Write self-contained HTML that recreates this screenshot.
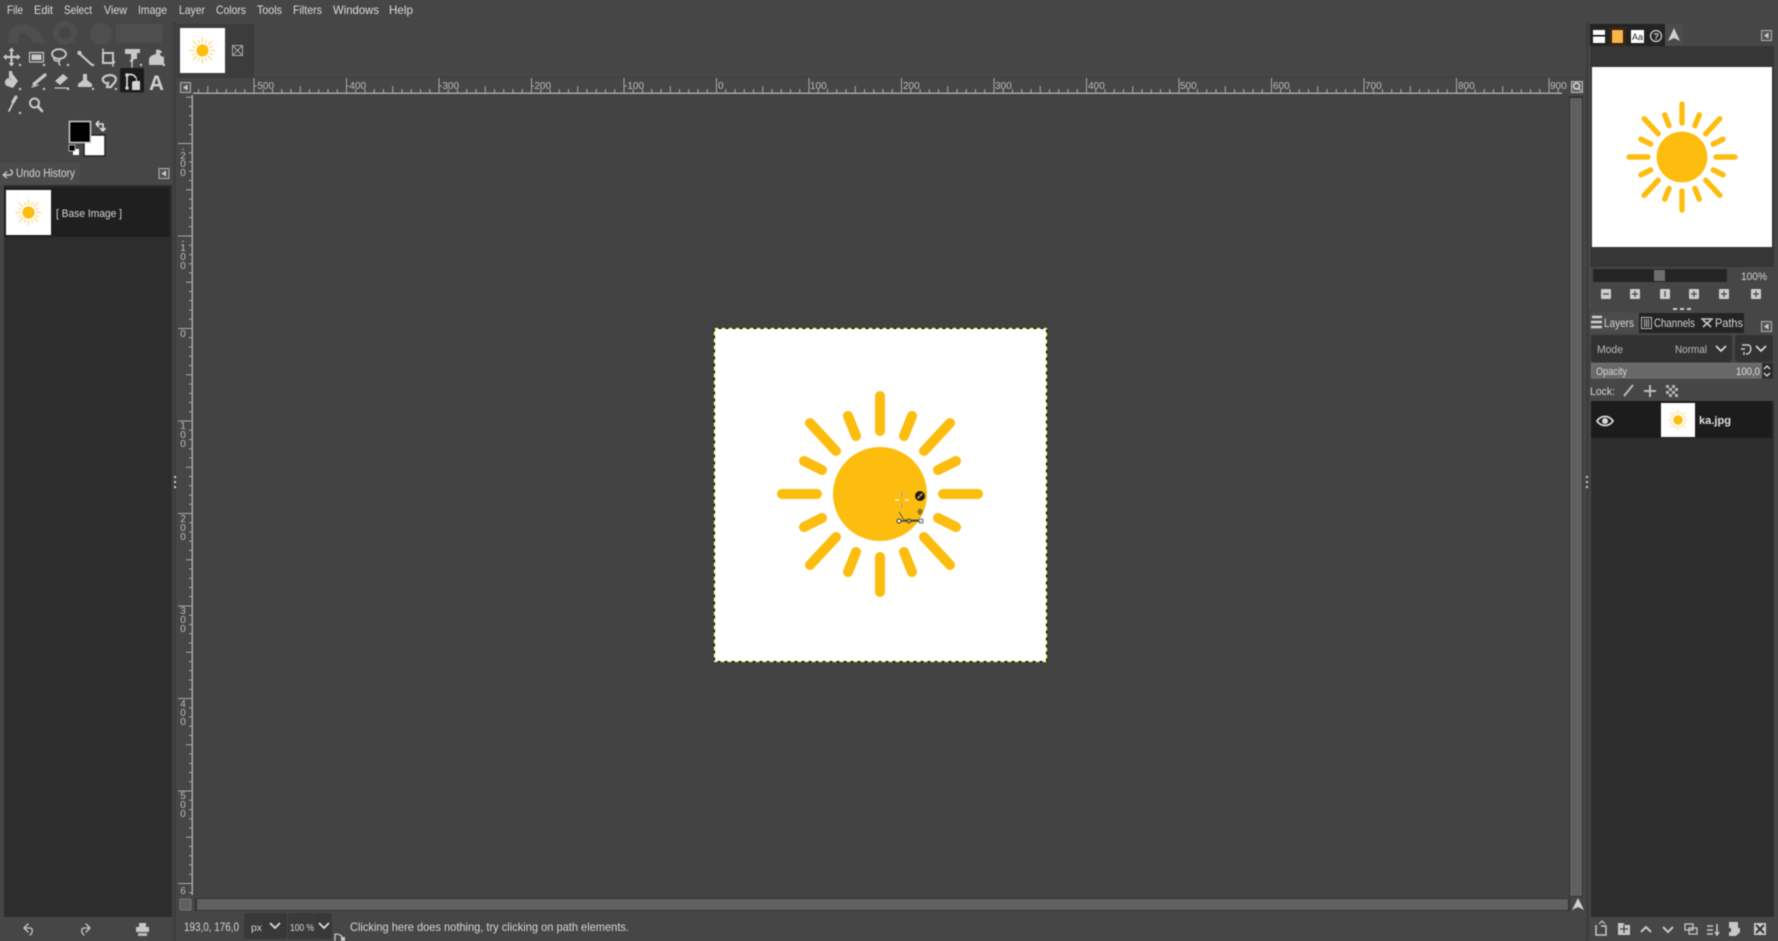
<!DOCTYPE html>
<html><head><meta charset="utf-8"><title>GIMP</title>
<style>
html,body{margin:0;padding:0;background:#464646;width:1778px;height:941px;overflow:hidden}
svg{display:block;filter:blur(.5px)}
text{font-family:"Liberation Sans",sans-serif;fill:#d6d6d6;font-size:12px}
.m{fill:#dcdcdc}
.i{fill:none;stroke:#c8c8c8;stroke-width:1.6}
.f{fill:#c8c8c8;stroke:none}
.r{fill:#bcbcbc;font-size:10px}
</style></head><body>
<svg width="1778" height="941" viewBox="0 0 1778 941" xmlns="http://www.w3.org/2000/svg">
<defs>
<g id="sun">
<circle r="47" fill="#fdbd0f"/>
<path d="M0-98V-63M0 98V63M-98 0H-63M98 0H63M-70-71L-44-43M70-71L44-43M-70 71L-44 43M70 71L44 43M-32-78L-24-58M32-78L24-58M-32 78L-24 58M32 78L24 58M-76-33L-58-24M76-33L58-24M-76 33L-58 24M76 33L58 24" stroke="#fdbd0f" stroke-width="10" stroke-linecap="round" fill="none"/>
</g>
<g id="sunT">
<path d="M0-98V-63M0 98V63M-98 0H-63M98 0H63M-70-71L-44-43M70-71L44-43M-70 71L-44 43M70 71L44 43M-32-78L-24-58M32-78L24-58M-32 78L-24 58M32 78L24 58M-76-33L-58-24M76-33L58-24M-76 33L-58 24M76 33L58 24" stroke="#fbd56a" stroke-width="8" stroke-linecap="round" fill="none"/>
<circle r="47" fill="#fdbd0f"/>
</g>
<pattern id="hr" patternUnits="userSpaceOnUse" x="716" y="78" width="92.5" height="16">
<path d="M.5 0V16M9.75 11V15M19 11V15M28.25 11V15M37.5 11V15M46.75 8V15M56 11V15M65.25 11V15M74.5 11V15M83.75 11V15" stroke="#aaa" stroke-width="1" fill="none"/>
</pattern>
<pattern id="vr" patternUnits="userSpaceOnUse" x="178" y="328" width="15" height="92.5">
<path d="M0 .5H15M11 9.75H15M11 19H15M11 28.25H15M11 37.5H15M8 46.75H15M11 56H15M11 65.25H15M11 74.5H15M11 83.75H15" stroke="#aaa" stroke-width="1" fill="none"/>
</pattern>
<g id="mb"><rect x=".5" y=".5" width="10" height="10" fill="#555" stroke="#b0b0b0"/><path d="M7.5 2.5V8.5L3 5.5Z" fill="#ccc"/></g>
</defs>

<rect width="1778" height="941" fill="#464646"/>
<!-- canvas -->
<rect x="193" y="94" width="1376" height="803" fill="#424242"/>

<!-- menu -->
<text class="m" x="7" y="14" textLength="16" lengthAdjust="spacingAndGlyphs">File</text>
<text class="m" x="34" y="14" textLength="19" lengthAdjust="spacingAndGlyphs">Edit</text>
<text class="m" x="64" y="14" textLength="28" lengthAdjust="spacingAndGlyphs">Select</text>
<text class="m" x="104" y="14" textLength="23" lengthAdjust="spacingAndGlyphs">View</text>
<text class="m" x="138" y="14" textLength="29" lengthAdjust="spacingAndGlyphs">Image</text>
<text class="m" x="179" y="14" textLength="26" lengthAdjust="spacingAndGlyphs">Layer</text>
<text class="m" x="216" y="14" textLength="30" lengthAdjust="spacingAndGlyphs">Colors</text>
<text class="m" x="257" y="14" textLength="25" lengthAdjust="spacingAndGlyphs">Tools</text>
<text class="m" x="293" y="14" textLength="29" lengthAdjust="spacingAndGlyphs">Filters</text>
<text class="m" x="333" y="14" textLength="46" lengthAdjust="spacingAndGlyphs">Windows</text>
<text class="m" x="389" y="14" textLength="24" lengthAdjust="spacingAndGlyphs">Help</text>

<!-- wilber watermark -->
<g fill="#4e4e4e">
<path d="M8 43V38C8 28 16 24 24 24C30 24 34 28 40 34L46 43H34L28 36C26 34 24 33 22 33C19 33 18 36 18 43Z"/>
<circle cx="65" cy="33" r="12"/><circle cx="101" cy="34" r="11"/>
<path d="M116 24H164L161 43H116Z"/>
</g>
<circle cx="65" cy="33" r="6" fill="#464646"/>

<!-- toolbox icons -->
<g class="i" stroke-linecap="round">
<!-- move -->
<path d="M11.500 50V64M5 57H18" stroke-width="2.2"/><path class="f" d="M11.500 47.500L14.500 51H8.500ZM11.500 66.500L14.500 63H8.500ZM3 57L6.500 54V60ZM20.500 57L17 54V60Z"/>
<!-- rect select -->
<rect x="29.500" y="52.500" width="14" height="9.500" stroke-dasharray="2 1" stroke-width="1.200"/><rect class="f" x="31.500" y="54.500" width="10" height="5.500"/>
<!-- lasso -->
<ellipse cx="59" cy="54" rx="7" ry="4.800" stroke-width="1.800"/><path d="M54 57C53 61 57 62 60 60C58 62 59 64 60 65" stroke-width="1.500"/>
<!-- fuzzy -->
<path d="M80 54L92 65" stroke-width="2.200"/><circle class="f" cx="79.500" cy="53" r="2.200"/>
<!-- crop -->
<rect x="103" y="53" width="10" height="10" stroke-width="2"/><path d="M103 49V53M113 63V66" stroke-width="1.500"/>
<!-- transform unified -->
<path class="f" d="M125 49H140V53H137V59H134L132 63L129 60H131V54H125Z"/><path d="M132 60V67" stroke-width="1.400"/>
<!-- warp -->
<path class="f" d="M149 65V60C149 56 153 55 156 54V50C158 49 162 50 162 53L160 53C160 55 160 56 164 57V65Z"/>
<!-- bucket -->
<path class="f" d="M12 73L18 81L13 88L7 86C4 84 4 80 8 78L11 80Z"/><rect class="f" x="9" y="71" width="3.200" height="8"/>
<!-- paint -->
<path d="M34 84L45 75" stroke-width="3.200"/><path d="M32 87L38 85" stroke-width="1.200"/>
<!-- eraser -->
<path class="f" d="M55 81L63 74L68 78L60 85Z"/><path d="M55 88H68" stroke-width="1.200"/>
<!-- clone stamp -->
<path class="f" d="M83 74H87V80L92 84V87H78V84L83 80Z"/>
<!-- smudge -->
<path d="M103 78C107 74 115 74 116 79C116 83 112 84 111 87H107L108 83C105 84 102 81 103 78Z" stroke-width="2.200"/>
</g>
<!-- paths active -->
<rect x="120" y="68" width="24" height="24.500" rx="2" fill="#1b1b1b"/>
<path d="M127 75V88M127 75C130 74 134 74 136 78" fill="none" stroke="#d4d4d4" stroke-width="1.800"/><circle cx="127" cy="75" r="1.800" fill="#d4d4d4"/><circle cx="127" cy="88" r="1.800" fill="#d4d4d4"/>
<path d="M134 81H136V78H137V81H140V90H132V82Z" fill="#d4d4d4"/>
<g class="i" stroke-linecap="round">
<!-- pick -->
<path d="M9 111L15 99" stroke-width="1.800"/><path d="M13 102L16 97" stroke-width="3.200"/>
<!-- zoom -->
<circle cx="34.500" cy="103" r="4.500" stroke-width="2"/><path d="M38.500 107L42 111" stroke-width="2.600"/>
</g>
<text x="149" y="90" style="font-size:21px;font-weight:bold;fill:#d0d0d0" textLength="15" lengthAdjust="spacingAndGlyphs">A</text>
<g fill="#c8c8c8">
<circle cx="20" cy="65" r="1.200"/><circle cx="44" cy="65" r="1.200"/><circle cx="68" cy="65" r="1.200"/><circle cx="93" cy="65" r="1.200"/><circle cx="114" cy="62" r="1.200"/><circle cx="141" cy="65" r="1.200"/><circle cx="164" cy="65" r="1.200"/>
<circle cx="20" cy="89" r="1.200"/><circle cx="44" cy="89" r="1.200"/><circle cx="68" cy="89" r="1.200"/><circle cx="93" cy="89" r="1.200"/><circle cx="116" cy="89" r="1.200"/><circle cx="20" cy="113" r="1.200"/>
</g>

<!-- colors -->
<rect x="84" y="135" width="21" height="21" fill="#fff" stroke="#222" stroke-width="1.500"/>
<rect x="69.500" y="121.500" width="21" height="21" fill="#000" stroke="#ccc" stroke-width="1.500"/>
<path d="M96 124H103V130M96 124L99 121M96 124L99 127M103 131L100 128M103 131L105.500 128" fill="none" stroke="#ddd" stroke-width="1.600"/>
<rect x="73" y="149" width="6" height="6" fill="#fff"/><rect x="69" y="145" width="6" height="6" fill="#000" stroke="#ccc" stroke-width=".8"/>

<!-- undo -->
<rect x="0" y="163" width="80" height="22" fill="#4b4b4b"/>
<path d="M3 175L7 171.500M3 175L7 178M3 175H10C13 175 13 170 10 170" fill="none" stroke="#c8c8c8" stroke-width="1.400"/>
<text x="16" y="177" textLength="59" lengthAdjust="spacingAndGlyphs">Undo History</text>
<use href="#mb" x="158.500" y="168"/>
<rect x="4" y="185" width="168" height="732" fill="#2d2d2d"/>
<rect x="4" y="187" width="166" height="50" fill="#1f1f1f"/>
<rect x="6" y="190" width="45" height="45" fill="#fff"/>
<use href="#sunT" transform="translate(28.500 212.500) scale(.13)"/>
<text x="56" y="217" textLength="66" lengthAdjust="spacingAndGlyphs" style="font-size:11px">[ Base Image ]</text>
<g class="i" stroke-linecap="round">
<path d="M24 928L28 924M24 928L28 932M24 928H30C33 928 33 933 30 935" stroke-width="1.300"/>
<path d="M90 928L86 924M90 928L86 932M90 928H84C81 928 81 933 84 935" stroke-width="1.300"/>
</g>
<path class="f" d="M139 923H146V927H149V932H136V927H139Z"/><rect x="138" y="933" width="9" height="3" fill="#bbb"/>

<!-- dividers -->
<rect x="173" y="22" width="3" height="919" fill="#3d3d3d"/>
<rect x="1586" y="22" width="3" height="919" fill="#3d3d3d"/>
<g fill="#cfcfcf"><rect x="174" y="476" width="2" height="2"/><rect x="174" y="481" width="2" height="2"/><rect x="174" y="486" width="2" height="2"/>
<rect x="1586" y="476" width="2" height="2"/><rect x="1586" y="481" width="2" height="2"/><rect x="1586" y="486" width="2" height="2"/></g>

<!-- image tab -->
<rect x="177" y="24" width="77" height="54" fill="#3c3c3c"/>
<rect x="180" y="28" width="45" height="45" fill="#fff"/>
<use href="#sunT" transform="translate(202.500 50.500) scale(.13)"/>
<rect x="232.500" y="45.500" width="10" height="10" fill="none" stroke="#aaa"/><path d="M233 46L242 55M242 46L233 55" stroke="#aaa"/>
<rect x="254" y="77" width="1332" height="1" fill="#3e3e3e"/>

<!-- rulers -->
<rect x="193" y="78" width="1369" height="16" fill="url(#hr)"/>
<rect x="193" y="92.500" width="1369" height="1.500" fill="#a8a8a8"/>
<rect x="178" y="95" width="15" height="800" fill="url(#vr)"/>
<rect x="191.500" y="95" width="1.500" height="800" fill="#a8a8a8"/>
<use href="#mb" x="180" y="82"/>
<rect x="1571.500" y="81.500" width="11" height="11" fill="#666" stroke="#bbb"/><circle cx="1576.500" cy="86" r="3" fill="none" stroke="#ddd" stroke-width="1.400"/><path d="M1579 88.500L1581 91" stroke="#ddd"/>
<text class="r" x="254" y="89">-500</text><text class="r" x="346" y="89">-400</text><text class="r" x="439" y="89">-300</text><text class="r" x="531" y="89">-200</text><text class="r" x="624" y="89">-100</text>
<text class="r" x="718" y="89">0</text><text class="r" x="810" y="89">100</text><text class="r" x="903" y="89">200</text><text class="r" x="995" y="89">300</text><text class="r" x="1088" y="89">400</text><text class="r" x="1180" y="89">500</text><text class="r" x="1273" y="89">600</text><text class="r" x="1365" y="89">700</text><text class="r" x="1458" y="89">800</text><text class="r" x="1550" y="89">900</text>
<g style="text-anchor:middle">
<text class="r" x="183" y="152" style="font-size:9px">-</text><text class="r" x="183" y="159">2</text><text class="r" x="183" y="167">0</text><text class="r" x="183" y="176">0</text>
<text class="r" x="183" y="244" style="font-size:9px">-</text><text class="r" x="183" y="251">1</text><text class="r" x="183" y="260">0</text><text class="r" x="183" y="269">0</text>
<text class="r" x="183" y="337">0</text>
<text class="r" x="183" y="429">1</text><text class="r" x="183" y="438">0</text><text class="r" x="183" y="447">0</text>
<text class="r" x="183" y="522">2</text><text class="r" x="183" y="531">0</text><text class="r" x="183" y="540">0</text>
<text class="r" x="183" y="614">3</text><text class="r" x="183" y="623">0</text><text class="r" x="183" y="632">0</text>
<text class="r" x="183" y="707">4</text><text class="r" x="183" y="716">0</text><text class="r" x="183" y="725">0</text>
<text class="r" x="183" y="799">5</text><text class="r" x="183" y="808">0</text><text class="r" x="183" y="817">0</text>
<text class="r" x="183" y="894">6</text>
</g>

<!-- scrollbars -->
<rect x="1569" y="96" width="14" height="801" fill="#333"/>
<rect x="1570" y="98" width="12" height="798" fill="#606060"/>
<rect x="195" y="898" width="1375" height="13" fill="#333"/>
<rect x="197" y="899" width="1371" height="11" fill="#606060"/>
<rect x="180" y="899" width="11" height="11" rx="1" fill="#5f5f5f" stroke="#777"/>
<path d="M1578 898L1584 910L1578 907L1572 910Z" fill="#d0d0d0"/>

<!-- image -->
<rect x="714.500" y="328.500" width="332" height="333" fill="#fff"/>
<rect x="714.500" y="328.500" width="332" height="333" fill="none" stroke="#000" stroke-width="1"/>
<rect x="714.500" y="328.500" width="332" height="333" fill="none" stroke="#ffff66" stroke-width="1.200" stroke-dasharray="4 3"/>
<use href="#sun" transform="translate(880 494)"/>
<!-- cursor -->
<path d="M902 492V497M902 503V508M895 500H899M905 500H909" stroke="#fff" stroke-width="1.300"/><path d="M902 492V497M902 503V508" stroke="#222" stroke-width=".5"/>
<circle cx="920" cy="496" r="5" fill="#1a1a1a"/><path d="M917.500 498.500L922.500 493.500" stroke="#fdbd0f" stroke-width="1.300"/>
<path d="M899 512L904 520H918" fill="none" stroke="#555" stroke-width="1"/><path d="M920 508L923 511L921 515H919L917 511Z" fill="#8a7a2a"/>
<path d="M899 521H921" stroke="#444" stroke-width="1.500"/><circle cx="899" cy="521" r="2" fill="#fff" stroke="#333"/><circle cx="909" cy="521" r="2" fill="#c9a22a" stroke="#444"/><rect x="919" y="519" width="4" height="4" fill="#ddd" stroke="#333" stroke-width=".6"/>

<!-- status bar -->
<text x="184" y="931" textLength="55" lengthAdjust="spacingAndGlyphs">193,0, 176,0</text>
<rect x="244" y="913" width="43" height="26" rx="3" fill="#383838"/>
<text x="251" y="931" textLength="11" lengthAdjust="spacingAndGlyphs" style="font-size:10px">px</text>
<path d="M270 923L275 928L280 923" fill="none" stroke="#ddd" stroke-width="1.700"/>
<rect x="288" y="913" width="28" height="26" fill="#3a3a3a"/>
<rect x="316" y="913" width="16" height="26" rx="3" fill="#383838"/>
<text x="290" y="931" textLength="24" lengthAdjust="spacingAndGlyphs" style="font-size:10px">100 %</text>
<path d="M319 923L324 928L329 923" fill="none" stroke="#ddd" stroke-width="1.700"/>
<path d="M335 934V941M335 934C338 934 341 935 342 937" stroke="#ccc" stroke-width="1.300" fill="none"/><rect x="341" y="937" width="4" height="4" fill="#ccc"/>
<text x="350" y="931" textLength="279" lengthAdjust="spacingAndGlyphs">Clicking here does nothing, try clicking on path elements.</text>

<!-- right dock: top -->
<rect x="1590" y="24" width="75" height="22" fill="#232323"/>
<rect x="1665" y="24" width="18" height="22" fill="#4b4b4b"/>
<rect x="1593" y="30" width="12" height="13" fill="#fff"/><rect x="1593" y="35" width="12" height="1.500" fill="#000"/>
<rect x="1612" y="30" width="11" height="13" fill="#f9b44a"/><rect x="1610" y="28" width="15" height="17" fill="none" stroke="#4a2a00" stroke-width="1.200"/>
<rect x="1631" y="30" width="13" height="13" fill="#fff"/>
<text x="1632" y="40" style="font-size:9px;fill:#222" textLength="11" lengthAdjust="spacingAndGlyphs">Aa</text>
<circle cx="1656" cy="36" r="5.500" fill="none" stroke="#ccc" stroke-width="1.300"/><text x="1653.500" y="39.500" style="font-size:9px;font-weight:bold">?</text>
<path d="M1674 28L1680 41L1674 38L1668 41Z" fill="#d0d0d0"/>
<use href="#mb" x="1761" y="30"/>
<rect x="1590" y="46" width="184" height="221" fill="#363636"/>
<rect x="1592" y="67" width="180" height="180" fill="#fff"/>
<use href="#sun" transform="translate(1682 157) scale(.54)"/>
<rect x="1589" y="46" width="1" height="262" fill="#555"/>
<rect x="1593" y="269" width="134" height="13" fill="#242424"/>
<rect x="1654" y="270" width="11" height="11" fill="#6e6e6e"/>
<text x="1741" y="280" textLength="26" lengthAdjust="spacingAndGlyphs" style="font-size:11px">100%</text>
<g fill="#cdcdcd">
<rect x="1601" y="289" width="10" height="10" rx="1"/><rect x="1630" y="289" width="10" height="10" rx="1"/><rect x="1660" y="289" width="10" height="10" rx="1"/><rect x="1689" y="289" width="10" height="10" rx="1"/><rect x="1719" y="289" width="10" height="10" rx="1"/><rect x="1751" y="289" width="10" height="10" rx="1"/>
</g>
<path d="M1603 294H1609M1632 294H1638M1635 291V297M1665 291V297M1691 294H1697M1694 291V297M1721 294H1727M1724 291V297M1753 294H1759M1756 291V297" stroke="#444" stroke-width="1.200" fill="none"/>
<g fill="#cfcfcf"><rect x="1673" y="308" width="4" height="2"/><rect x="1680" y="308" width="4" height="2"/><rect x="1687" y="308" width="4" height="2"/></g>

<!-- right dock: layers -->
<rect x="1589" y="312" width="50" height="21" fill="#4b4b4b"/>
<rect x="1639" y="313" width="105" height="20" fill="#242424"/>
<path d="M1592 317H1602M1591 322H1602M1591 327H1602" stroke="#d0d0d0" stroke-width="2.600" fill="none"/>
<text x="1604" y="327" textLength="30" lengthAdjust="spacingAndGlyphs">Layers</text>
<rect x="1641.500" y="317.500" width="10" height="11" fill="none" stroke="#bbb"/><path d="M1644.500 319V327M1646.500 319V327M1648.500 319V327" stroke="#bbb"/>
<text x="1654" y="327" textLength="41" lengthAdjust="spacingAndGlyphs">Channels</text>
<path d="M1701 319H1713M1703 327L1711 320M1711 327L1703 320" stroke="#ccc" stroke-width="1.500" fill="none"/>
<text x="1715" y="327" textLength="28" lengthAdjust="spacingAndGlyphs">Paths</text>
<use href="#mb" x="1761" y="321"/>
<rect x="1591" y="335" width="141" height="27" rx="3" fill="#323232"/>
<rect x="1735" y="335" width="38" height="27" rx="3" fill="#323232"/>
<text x="1597" y="353" textLength="26" lengthAdjust="spacingAndGlyphs" style="font-size:11px;fill:#bbb">Mode</text>
<text x="1675" y="353" textLength="32" lengthAdjust="spacingAndGlyphs" style="font-size:11px;fill:#bbb">Normal</text>
<path d="M1716 346L1721 351L1726 346M1756 346L1761 351L1766 346" fill="none" stroke="#ddd" stroke-width="1.600"/>
<path d="M1742 345H1748C1752 345 1752 354 1746 354M1744 355V352M1741 349H1745" fill="none" stroke="#ccc" stroke-width="1.400"/>
<rect x="1591" y="363" width="182" height="15.500" fill="#2c2c2c"/>
<rect x="1591.500" y="363.500" width="170" height="14.500" fill="#686868" stroke="#808080" stroke-width=".8"/>
<text x="1596" y="375" textLength="31" lengthAdjust="spacingAndGlyphs" style="font-size:11px;fill:#d8d8d8">Opacity</text>
<text x="1736" y="375" textLength="24" lengthAdjust="spacingAndGlyphs" style="font-size:11px;fill:#e0e0e0">100,0</text>
<path d="M1764 369L1767 366L1770 369M1764 373L1767 376L1770 373" fill="none" stroke="#ddd" stroke-width="1.300"/>
<text x="1590" y="395" textLength="25" lengthAdjust="spacingAndGlyphs" style="font-size:11px">Lock:</text>
<path d="M1624 396L1633 385" stroke="#bbb" stroke-width="2"/>
<path d="M1650 385V397M1644 391H1656" stroke="#bbb" stroke-width="2"/>
<g fill="#b4b4b4"><rect x="1666" y="385" width="3" height="3"/><rect x="1672" y="385" width="3" height="3"/><rect x="1669" y="388" width="3" height="3"/><rect x="1675" y="388" width="3" height="3"/><rect x="1666" y="391" width="3" height="3"/><rect x="1672" y="391" width="3" height="3"/><rect x="1669" y="394" width="3" height="3"/><rect x="1675" y="394" width="3" height="3"/></g>
<rect x="1591" y="401" width="183" height="516" fill="#2d2d2d"/>
<rect x="1591" y="401" width="181" height="37" fill="#1c1c1c"/>
<path d="M1597 421C1601 415 1609 415 1613 421C1609 427 1601 427 1597 421Z" fill="none" stroke="#d8d8d8" stroke-width="1.800"/><circle cx="1605" cy="421" r="3" fill="#d8d8d8"/>
<rect x="1661" y="403" width="34" height="34" fill="#fff"/>
<use href="#sunT" transform="translate(1678 420) scale(.1)"/>
<text x="1699" y="424" textLength="32" lengthAdjust="spacingAndGlyphs" style="font-size:11px;font-weight:bold;fill:#e0e0e0">ka.jpg</text>
<g class="i">
<path d="M1596 925V935H1606V926H1601" stroke-width="1.500"/><path d="M1599 924L1602 921L1605 924" stroke-width="1.200"/>
<path class="f" d="M1618 923H1623L1625 925H1630V935H1618Z"/>
<path d="M1641 932L1646 927L1651 932M1663 927L1668 932L1673 927" stroke-width="2"/>
<rect x="1685" y="924" width="8" height="6" stroke-width="1.300"/><rect x="1689" y="928" width="8" height="6" stroke-width="1.300"/>
<path d="M1707 926H1713M1707 930H1713M1707 934H1713M1717 924V934M1715 932L1717 935L1719 932" stroke-width="1.500"/>
<path class="f" d="M1729 922H1738V928H1740V932L1736 936H1729V932H1731V928H1729Z"/>
<rect class="f" x="1754" y="923" width="12" height="12"/>
</g>
<path d="M1756 925L1764 933M1764 925L1756 933" stroke="#333" stroke-width="2"/>
<path d="M1620 929H1628M1624 925V933" stroke="#444" stroke-width="1.300"/>
</svg>
</body></html>
